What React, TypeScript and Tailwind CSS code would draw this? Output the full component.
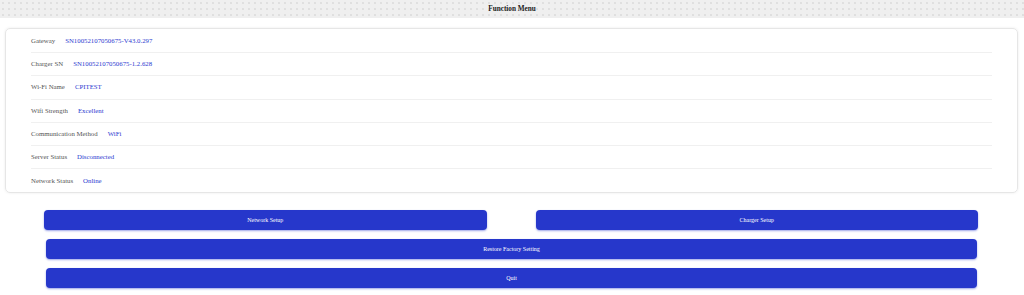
const rows = [
  { label: 'Gateway', value: 'SN10052107050675-V43.0.297' },
  { label: 'Charger SN', value: 'SN10052107050675-1.2.628' },
  { label: 'Wi-Fi Name', value: 'CPITEST' },
  { label: 'Wifi Strength', value: 'Excellent' },
  { label: 'Communication Method', value: 'WiFi' },
  { label: 'Server Status', value: 'Disconnected' },
  { label: 'Network Status', value: 'Online' },
];

const btn =
  'h-[20px] rounded-[4px] bg-[#2637cb] text-white text-[6px] shadow-[0_1px_2px_rgba(37,55,203,0.45)] flex items-center justify-center';

export default function App() {
  return (
    <div className="w-[1024px] h-[295px] bg-white font-['Liberation_Serif',serif] overflow-hidden">
      {/* Header */}
      <div className="h-[18px] bg-[#efefef] bg-[radial-gradient(#dedede_0.7px,transparent_0.8px)] bg-[length:6px_6px] flex items-center justify-center">
        <span className="text-[7.2px] font-bold text-[#222]">Function Menu</span>
      </div>

      {/* Info card */}
      <div className="mt-[10px] ml-[5px] mr-[6px] h-[165px] rounded-[5px] border border-[#e6e6e6] shadow-[0_0_3px_rgba(0,0,0,0.08)] px-[25px] pt-[1px]">
        {rows.map((r, i) => (
          <div
            key={r.label}
            className={`h-[23.2px] flex items-center gap-[10px] text-[6.8px] ${
              i < rows.length - 1 ? 'border-b border-[#f0f0f0]' : ''
            }`}
          >
            <span className="text-[#555]">{r.label}</span>
            <span className="text-[#2b3bd0]">{r.value}</span>
          </div>
        ))}
      </div>

      {/* Actions */}
      <div className="mt-[17px] flex flex-col gap-[9px]">
        <div className="flex gap-[49px] pl-[44px] pr-[46px]">
          <button className={`${btn} flex-1`}>Network Setup</button>
          <button className={`${btn} flex-1`}>Charger Setup</button>
        </div>
        <div className="pl-[46px] pr-[47px] flex flex-col gap-[9px]">
          <button className={`${btn} w-full`}>Restore Factory Setting</button>
          <button className={`${btn} w-full`}>Quit</button>
        </div>
      </div>
    </div>
  );
}
